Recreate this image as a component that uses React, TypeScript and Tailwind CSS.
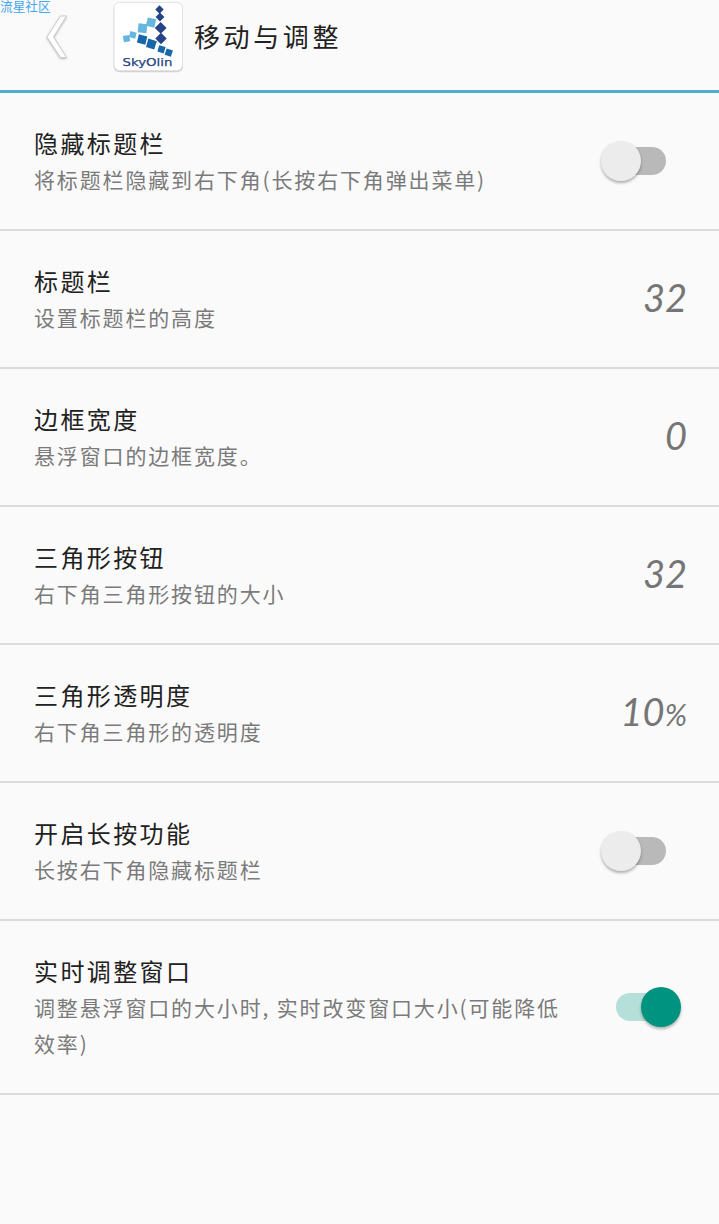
import { useState } from "react";
import clsx from "clsx";

interface Setting {
  id: string;
  title: string;
  summary: string;
  value?: string;
  unit?: string;
  enabled?: boolean;
}

const settings: Setting[] = [
  { id: "hideTitle", title: "隐藏标题栏", summary: "将标题栏隐藏到右下角(长按右下角弹出菜单)", enabled: false },
  { id: "titleBar", title: "标题栏", summary: "设置标题栏的高度", value: "32" },
  { id: "border", title: "边框宽度", summary: "悬浮窗口的边框宽度。", value: "0" },
  { id: "triangle", title: "三角形按钮", summary: "右下角三角形按钮的大小", value: "32" },
  { id: "alpha", title: "三角形透明度", summary: "右下角三角形的透明度", value: "10", unit: "%" },
  { id: "longPress", title: "开启长按功能", summary: "长按右下角隐藏标题栏", enabled: false },
  { id: "realtime", title: "实时调整窗口", summary: "调整悬浮窗口的大小时, 实时改变窗口大小(可能降低效率)", enabled: true },
];

function Logo() {
  return (
    <svg width="72" height="72" viewBox="112 1 72 72" className="ml-[38px] mt-px shrink-0">
      <rect x="113.5" y="3.2" width="69.5" height="69" rx="6" fill="#d3d3d3" />
      <rect x="114" y="2.5" width="68.5" height="68" rx="5.5" fill="#fff" stroke="#e2e2e2" />
      <g fill="#264488">
        <path d="M159.5 5.3l4.2 4.2-4.2 4.2-4.2-4.2z" />
        <path d="M160 12.6l4.4 4.4-4.4 4.4-4.4-4.4z" />
        <path d="M160.7 22l5.9 5.9-5.9 5.9-5.9-5.9z" />
        <path d="M161 32.8l5.7 5.7-5.7 5.7-5.7-5.7z" />
      </g>
      <g fill="#66b7e0">
        <path d="M147.8 17.4l8.4 1.9-1.9 8.4-8.4-2z" />
        <path d="M138.6 23.2l8.8 1-1 9-8.8-1z" />
        <path d="M130.3 31l6.3 1.7-1.4 6-6.2-1.6z" />
        <path d="M122.9 36l6.3-1 1 6.3-6.3 1z" />
      </g>
      <g fill="#1768a8">
        <path d="M138.9 34.2l8.4 2.2-2 8.4-8.4-2.2z" />
        <path d="M148.4 38.6l8.4 2.6-2.6 8.4-8.2-2.6z" />
        <path d="M159.2 45.2l6.4 1.9-1.9 6.3-6.3-1.9z" />
        <path d="M166.7 48.5l6.2 2.1-2 6.2-6.3-2z" />
      </g>
      <text x="122.5" y="65.5" textLength="50" lengthAdjust="spacingAndGlyphs" fontSize="11" fill="#294684" stroke="#294684" strokeWidth=".25" className="font-['DejaVu_Sans',sans-serif]">
        SkyOlin
      </text>
    </svg>
  );
}

function Toggle({ on, onChange }: { on: boolean; onChange: () => void }) {
  return (
    <button
      role="switch"
      aria-checked={on}
      onClick={onChange}
      className={clsx("relative flex h-10 w-[65px] shrink-0 items-center", on ? "mr-[38px] justify-start" : "mr-[53px] justify-end")}
    >
      <span className={clsx("h-7 w-[59px] rounded-full", on ? "bg-[#b4e0d9]" : "bg-[#b9b9b9]")} />
      <span
        className={clsx(
          "absolute top-0 size-10 rounded-full shadow-[0_2px_3px_rgba(0,0,0,0.3)]",
          on ? "right-0 bg-[#009380]" : "left-0 bg-[#ececec]"
        )}
      />
    </button>
  );
}

export default function App() {
  const [switches, setSwitches] = useState<Record<string, boolean>>(
    Object.fromEntries(settings.map((s) => [s.id, !!s.enabled]))
  );

  const toggle = (id: string) => setSwitches((prev) => ({ ...prev, [id]: !prev[id] }));

  return (
    <div className="relative min-h-screen bg-[#fafafa] font-['Noto_Sans_CJK_SC',sans-serif] text-[#212121]">
      <span className="absolute left-0 top-0 whitespace-nowrap font-['Liberation_Sans','Noto_Sans_CJK_SC',sans-serif] text-[12.7px] leading-[15px] text-[#45a5ee]">流星社区</span>

      <header className="flex h-[93px] items-start border-b-3 border-[#4dadcd]">
        <button aria-label="返回" className="ml-11 mt-3.5 shrink-0">
          <svg width="30" height="48" viewBox="44 14 30 48" fill="none" className="drop-shadow-[0_1px_1px_rgba(0,0,0,0.25)]">
            <path d="M60.5 16h6L53.5 37l13 20.5h-6L47 37z" fill="#fff" stroke="#cacaca" strokeWidth="1" strokeLinejoin="round" />
          </svg>
        </button>
        <Logo />
        <h1 className="ml-2.5 mt-4 text-[26px] font-normal leading-10 tracking-[3.6px]">移动与调整</h1>
      </header>

      <ul>
        {settings.map((s) => (
          <li key={s.id} className="flex items-center border-b-2 border-[#dcdcdc] py-8 pl-[34px]">
            <div className="w-[530px] shrink-0">
              <h2 className="text-2xl/9 font-normal tracking-[2.4px]">{s.title}</h2>
              <p className="text-[21px]/9 font-normal tracking-[1.85px] text-[#7a7a7a]">{s.summary}</p>
            </div>
            <div className="flex flex-1 justify-end">
              {s.value !== undefined ? (
                <span className="mb-1 mr-8 font-['Lato',sans-serif] text-[38px] leading-none italic text-[#757575]">
                  {s.value}
                  {s.unit && <span className="text-[30px]">{s.unit}</span>}
                </span>
              ) : (
                <Toggle on={switches[s.id]} onChange={() => toggle(s.id)} />
              )}
            </div>
          </li>
        ))}
      </ul>
    </div>
  );
}
